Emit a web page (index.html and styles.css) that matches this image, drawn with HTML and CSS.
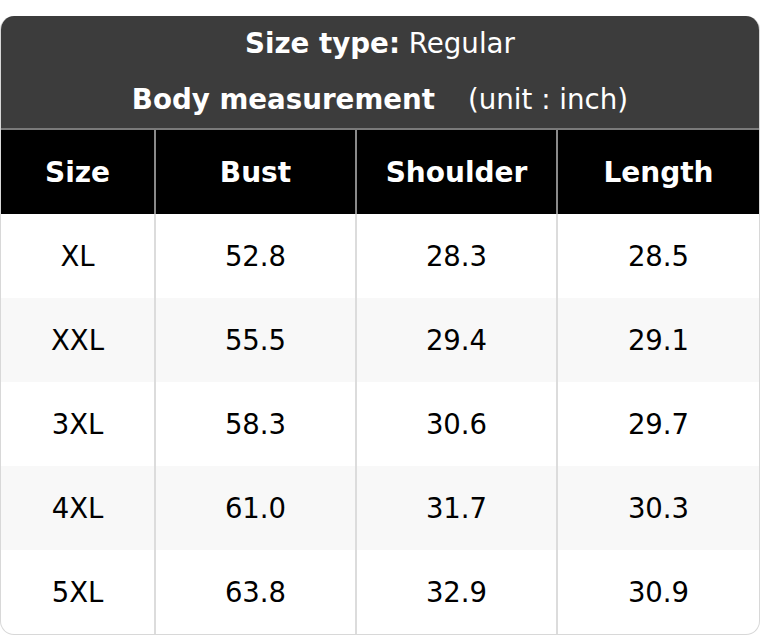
FILE: index.html
```html
<!DOCTYPE html>
<html>
<head>
<meta charset="utf-8">
<link rel="stylesheet" href="styles.css">
</head>
<body>
<div class="card">
  <div class="title">
    <div class="title-line"><b>Size type:</b> Regular</div>
    <div class="title-line"><b>Body measurement</b><span class="unit">(unit : inch)</span></div>
  </div>
  <table class="sizes">
    <colgroup>
      <col class="c1"><col class="c2"><col class="c3"><col class="c4">
    </colgroup>
    <thead>
      <tr><th>Size</th><th>Bust</th><th>Shoulder</th><th>Length</th></tr>
    </thead>
    <tbody>
      <tr><td>XL</td><td>52.8</td><td>28.3</td><td>28.5</td></tr>
      <tr><td>XXL</td><td>55.5</td><td>29.4</td><td>29.1</td></tr>
      <tr><td>3XL</td><td>58.3</td><td>30.6</td><td>29.7</td></tr>
      <tr><td>4XL</td><td>61.0</td><td>31.7</td><td>30.3</td></tr>
      <tr><td>5XL</td><td>63.8</td><td>32.9</td><td>30.9</td></tr>
    </tbody>
  </table>
</div>
</body>
</html>
```
FILE: styles.css
```css
html, body {
  margin: 0;
  padding: 0;
  background: #ffffff;
}
body {
  font-family: "DejaVu Sans", sans-serif;
  color: #000;
}
.card {
  margin-top: 16px;
  width: 760px;
  box-sizing: border-box;
  border-radius: 14px;
  overflow: hidden;
  border: 1px solid #d8d8d8;
  border-top: none;
}
.title {
  background: #3c3c3c;
  color: #fff;
  height: 114px;
  display: flex;
  flex-direction: column;
  align-items: center;
  border-bottom: 2px solid #7a7a7a;
  box-sizing: border-box;
}
.title-line {
  font-size: 27.7px;
  height: 56px;
  line-height: 55px;
}
.unit {
  margin-left: 33px;
}
.sizes {
  width: 100%;
  border-collapse: separate;
  border-spacing: 0;
  table-layout: fixed;
}
.c1 { width: 153px; }
.c2 { width: 201px; }
.c3 { width: 201px; }
.sizes th, .sizes td {
  text-align: center;
  padding: 0;
  box-sizing: border-box;
}
.sizes th {
  background: #000;
  color: #fff;
  font-weight: bold;
  font-size: 28px;
  height: 84px;
  border-left: 2px solid #8a8a8a;
}
.sizes td {
  font-size: 27.5px;
  height: 84px;
  border-left: 2px solid #dcdcdc;
}
.sizes th:first-child, .sizes td:first-child {
  border-left: none;
}
.sizes tbody tr:nth-child(even) td {
  background: #f8f8f8;
}
```
